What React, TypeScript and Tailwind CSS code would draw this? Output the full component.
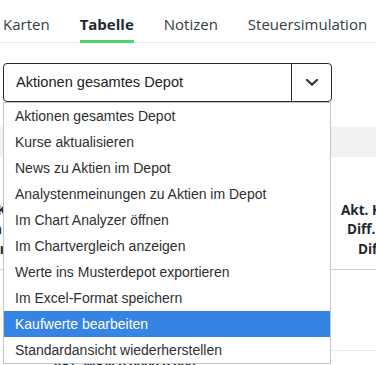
import React, {useState} from 'react';

const tabs = ['Karten', 'Tabelle', 'Notizen', 'Steuersimulation'];

const actions = [
    'Aktionen gesamtes Depot',
    'Kurse aktualisieren',
    'News zu Aktien im Depot',
    'Analystenmeinungen zu Aktien im Depot',
    'Im Chart Analyzer öffnen',
    'Im Chartvergleich anzeigen',
    'Werte ins Musterdepot exportieren',
    'Im Excel-Format speichern',
    'Kaufwerte bearbeiten',
    'Standardansicht wiederherstellen',
];

const App: React.FC = () => {
    const [active] = useState('Tabelle');
    const [hovered, setHovered] = useState(8);

    return (
        <div className="w-[376px] h-[365px] overflow-hidden bg-white font-['Open_Sans',sans-serif] text-[#333d47]">
            {/* tabs */}
            <div className="flex gap-[30px] pl-[3px] border-b border-[#ececec] whitespace-nowrap">
                {tabs.map(tab => (
                    <div
                        key={tab}
                        className={
                            tab === active
                                ? '-mb-px pt-[14px] pb-[6px] leading-[20px] text-[15px] font-bold text-[#232a31] border-b-[3px] border-[#48d66c]'
                                : '-mb-px pt-[14px] pb-[6px] leading-[20px] text-[15px] border-b-[3px] border-transparent'
                        }
                    >
                        {tab}
                    </div>
                ))}
            </div>

            {/* action select with open list */}
            <div className="relative mt-[20px] ml-[3px] w-[329px] font-['Liberation_Sans',Arial,sans-serif]">
                <div className="flex h-[39px] border border-[#1f2b36] rounded-[4px]">
                    <div className="flex-1 flex items-center pl-[12px] text-[14.6px] text-[#222]">
                        Aktionen gesamtes Depot
                    </div>
                    <div className="w-[40px] flex items-center justify-center border-l border-[#1f2b36]">
                        <svg width="12" height="7" viewBox="0 0 12 7" fill="none">
                            <polyline points="1,1 6,5.6 11,1" stroke="#2a3640" strokeWidth="2.2"
                                      strokeLinecap="round" strokeLinejoin="round"/>
                        </svg>
                    </div>
                </div>

                <div className="absolute z-10 left-0 top-[39px] w-[328px] bg-white border border-[#c4c4c4]">
                    {actions.map((a, i) => (
                        <div
                            key={a}
                            onMouseEnter={() => setHovered(i)}
                            className={
                                i === hovered
                                    ? 'h-[26px] flex items-center pl-[11px] text-[14px] bg-[#3584e4] text-white'
                                    : 'h-[26px] flex items-center pl-[11px] text-[14px] text-[#2f2f2f]'
                            }
                        >
                            {a}
                        </div>
                    ))}
                </div>
            </div>

            {/* table behind the list (scrolled sideways) */}
            <div className="mt-[25px] h-[30px] bg-[#f2f2f2]"/>
            <div className="flex h-[113px] items-end pb-[10px] border-b border-[#cfcfcf] text-[13.5px] font-bold leading-[19.5px] text-[#1e2830] whitespace-nowrap">
                <div className="w-[80px] -ml-[74px] text-right">
                    <div>Stk./Nom. K</div>
                    <div>Kaufdatum y</div>
                    <div>Kaufwert r</div>
                </div>
                <div className="flex-1"/>
                <div className="w-[35px] shrink-0">
                    <div>Akt. Kurs</div>
                    <div className="ml-[6px]">Diff. abs.</div>
                    <div className="ml-[17px]">Diff. %</div>
                </div>
            </div>
            <div className="h-[81px] border-b border-[#e8e8e8] pt-[9px]">
                <span className="-ml-[4px] text-[13px] text-[#333d47]">›</span>
            </div>
            <div className="pl-[53px] pt-[4px] text-[13px] font-bold text-[#1e2830]">
                AKt. WKN 0 0000 0 000
            </div>
        </div>
    );
};

export default App;
